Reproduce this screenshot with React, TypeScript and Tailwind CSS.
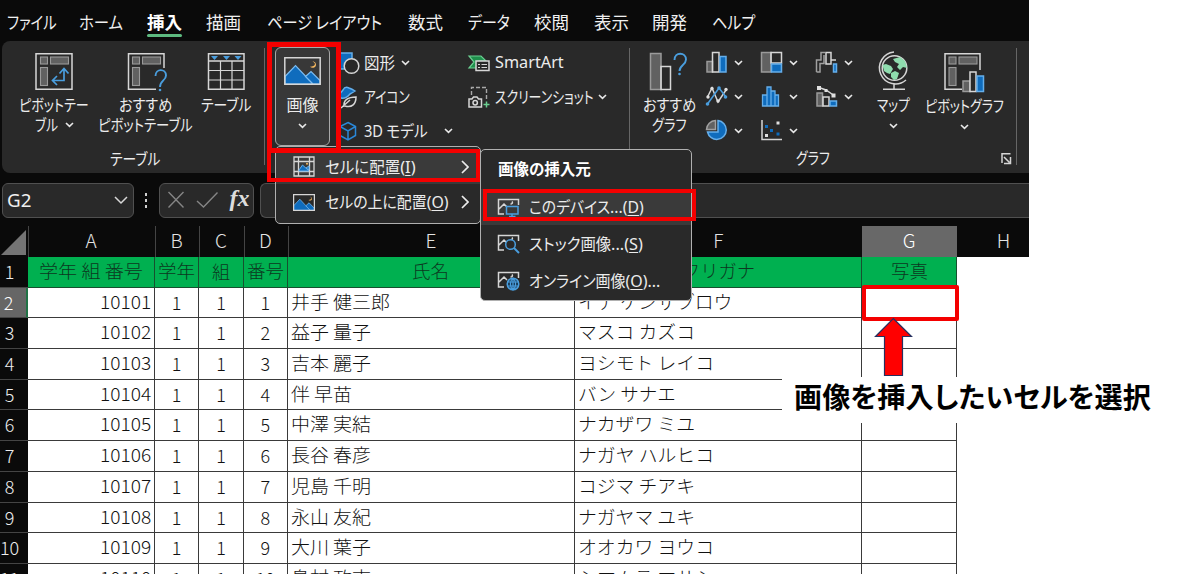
import { useLayoutEffect, useRef, useState, type ReactNode } from "react";

/** Single line of text condensed or stretched to a given width. */
function Fit({ w, className = "", children }: { w: number; className?: string; children: ReactNode }) {
  const ref = useRef<HTMLSpanElement>(null);
  const [scale, setScale] = useState(1);
  useLayoutEffect(() => {
    const el = ref.current;
    if (el && el.offsetWidth) setScale(w / el.offsetWidth);
  }, [w, children]);
  return (
    <span className={`inline-block shrink-0 whitespace-nowrap text-left ${className}`} style={{ width: w }}>
      <span ref={ref} className="inline-block origin-left" style={{ transform: `translateY(-1px) scaleX(${scale})` }}>
        {children}
      </span>
    </span>
  );
}

/** Drawing whose box is [x, y, width, height] in window coordinates. */
function Pic({ box, className = "", children }: { box: [number, number, number, number]; className?: string; children: ReactNode }) {
  return (
    <svg className={`block shrink-0 ${className}`} width={box[2]} height={box[3]} viewBox={box.join(" ")} fill="none" stroke="#d6d6d6" strokeWidth="1.5">
      {children}
    </svg>
  );
}

function Chevron({ className = "" }: { className?: string }) {
  return (
    <svg className={`block shrink-0 ${className}`} width="9" height="6" viewBox="0 0 9 6" fill="none" stroke="#e8e8e8" strokeWidth="1.6">
      <path d="M1 1l3.5 3.4L8 1" />
    </svg>
  );
}

const BLUE = "#0f6cbd";
const SKY = "#4a9ede";

const PivotFrame = ({ x, cut }: { x: number; cut: string }) => (
  <>
    <path d={cut} />
    <g fill="#616161" stroke="#9a9a9a" strokeWidth="1.1">
      <rect x={x + 4.5} y="57" width="7" height="7" />
      <rect x={x + 14.5} y="57" width="18" height="7" />
      <rect x={x + 4.5} y="67.5" width="7" height="18" />
    </g>
  </>
);

const tabs: [string, number][] = [
  ["ファイル", 50], ["ホーム", 44], ["挿入", 35], ["描画", 35], ["ページ レイアウト", 115], ["数式", 35],
  ["データ", 42], ["校閲", 35], ["表示", 35], ["開発", 35], ["ヘルプ", 43],
];

function Tabs() {
  return (
    <nav className="grid h-[41px] grid-cols-[72px_68px_59px_61px_141px_60px_66px_60px_58px_60px_60px] pl-[7px] pt-[12px] text-[17.5px] leading-[21px] text-[#f0f0f0]">
      {tabs.map(([t, w], i) => (
        <div key={t} className="flex flex-col items-start">
          <Fit w={w} className={i === 2 ? "font-bold text-white" : ""}>{t}</Fit>
          {i === 2 && <div className="mt-px h-[3px] w-[35px] rounded-full bg-[#5dba80]" />}
        </div>
      ))}
    </nav>
  );
}

function TableGroup() {
  return (
    <section className="flex h-[132px] w-[262px] flex-col">
      <div className="flex h-[106px] pt-[10px]">
        <div className="ml-[13px] flex w-[78px] flex-col items-center">
          <Pic box={[36, 51, 38, 41]}>
            <PivotFrame x={37} cut="M37 53.7H73V89.3H37Z" />
            <path stroke={SKY} strokeWidth="1.7" d="M65 69V80.5H54M60.5 73.5L65 68.5L69.5 73.5M58 76L53.5 80.5L58 85" />
          </Pic>
          <Fit w={70} className="mt-[3px] leading-[20px]">ピボットテー</Fit>
          <div className="flex items-center gap-[7px] leading-[21px]"><Fit w={23}>ブル</Fit><Chevron className="mb-px" /></div>
        </div>
        <div className="ml-[3px] flex w-[99px] flex-col items-center">
          <Pic box={[127, 51, 42, 41]} className="ml-1">
            <PivotFrame x={128} cut="M164 68V53.7H128.5V89.3H156" />
            <path stroke={SKY} strokeWidth="1.9" d="M155.5 76C155.5 68 166 68.5 166 75.5C166 80.5 160 80.5 160 87" />
            <circle cx="160" cy="90" r="1.3" fill={SKY} stroke="none" />
          </Pic>
          <Fit w={53} className="mt-[3px] leading-[20px]">おすすめ</Fit>
          <Fit w={95} className="leading-[21px]">ピボットテーブル</Fit>
        </div>
        <div className="ml-[5px] flex w-[52px] flex-col items-center">
          <Pic box={[207, 51, 38, 41]}>
            <path d="M208.500 53.700H244V89.300H208.500ZM208.500 61H244" />
            <path strokeWidth="1.200" d="M208.500 70.500H244M208.500 80H244M220.500 61V89M232 61V89" />
            <path fill={SKY} stroke="none" d="M211 56h7l-3.500 4zM223 56h7l-3.500 4zM234.500 56h7l-3.500 4z" />
          </Pic>
          <Fit w={50} className="mt-[3px] leading-[20px]">テーブル</Fit>
        </div>
      </div>
      <Fit w={50} className="ml-[108px] leading-[24px]">テーブル</Fit>
    </section>
  );
}

const Landscape = ({ box }: { box: [number, number, number, number] }) => (
  <svg className="block shrink-0" width={box[2]} height={box[3]} viewBox="0 0 37 28" preserveAspectRatio="none" fill="none" stroke="#d6d6d6" strokeWidth="1.5">
    <path fill={BLUE} stroke="#7cbcf0" strokeWidth="1.2" d="M1 19.500L11.500 8.500L29 27H1Z" />
    <path fill={BLUE} stroke="#7cbcf0" strokeWidth="1.2" d="M21.500 19.500L27 14.500L36 23.500V27H29Z" />
    <path vectorEffect="non-scaling-stroke" d="M.8.8H36.200V27.200H.8Z" />
    <path fill="#f5b860" stroke="none" d="M28.500 4.500C32.500 6 31.500 9.500 26 9.800C29 12.500 33.500 9.500 31.500 6C31 5 30 4.500 28.500 4.500Z" />
  </svg>
);

function IllustrationGroup() {
  return (
    <section className="flex h-[132px] w-[364px] pl-[10px] pt-[6px]">
      <div className="flex h-[99px] w-[55px] flex-col items-center rounded-[6px] border-[1.500px] border-[#a8a8a8] bg-[#383838] pt-[9px]">
        <Landscape box={[284, 57, 37, 28]} />
        <Fit w={32} className="mt-[9px] leading-[22px]">画像</Fit>
        <Chevron className="mt-[7px]" />
      </div>
      <div className="ml-[6px] flex w-[131px] flex-col leading-[34px]">
        <div className="flex h-[31px] items-center">
          <Pic box={[336, 50, 24, 24]}>
            <path fill={BLUE} stroke="#65aeea" d="M338 52H352V68H338Z" />
            <circle cx="351.500" cy="65" r="7.300" fill="#292929" />
          </Pic>
          <Fit w={31} className="ml-[4px]">図形</Fit><Chevron className="ml-[6px]" />
        </div>
        <div className="mt-[2px] flex h-[34px] items-center">
          <Pic box={[336, 84, 24, 24]}>
            <path fill={BLUE} stroke="#65aeea" d="M338 95L343 89Q345 85 349 87Q352 88 355 90Q352 92 350 93Q346 98 341 97Z" />
            <path fill="#292929" d="M344 106C343 99 348 96 356 96C356 103 352 107 345 105M341 107L350 99" />
          </Pic>
          <Fit w={46} className="ml-[4px]">アイコン</Fit>
        </div>
        <div className="flex h-[34px] items-center">
          <Pic box={[336, 118, 24, 24]}>
            <path stroke="#2b88d8" d="M348 121.500L355.500 125.500V134.500L348 139L340 134.500V125.500ZM340 125.500L348 130L355.500 125.500M348 130V139" />
          </Pic>
          <Fit w={64} className="ml-[4px]"><span className="font-['Noto_Sans'] leading-none">3D</span> モデル</Fit><Chevron className="ml-[16px]" />
        </div>
      </div>
      <div className="flex flex-col leading-[34px]">
        <div className="flex h-[31px] items-center">
          <Pic box={[467, 50, 24, 24]}>
            <path fill="#1f8f4c" stroke="#6bcf91" strokeWidth="1.200" d="M469 55H481L486 60H479V67H469L474 61Z" />
            <path fill="#292929" d="M476 60H489V69.500H476Z" />
            <path strokeWidth="1.200" d="M478 63.500h2M481.500 63.500h5.500M478 66.500h2M481.500 66.500h5.500" />
          </Pic>
          <Fit w={69} className="ml-[4px] font-['Noto_Sans']">SmartArt</Fit>
        </div>
        <div className="mt-[2px] flex h-[34px] items-center">
          <Pic box={[467, 84, 24, 24]}>
            <path stroke="#a8a8a8" strokeWidth="1.400" strokeDasharray="4 2" d="M471.500 94V86.500H486.500V100" />
            <path fill="#292929" d="M469 98H472L473.500 96H477L478.500 98H481.500V106H469Z" />
            <circle cx="475.200" cy="101.800" r="2.200" />
            <path stroke="#6bcf91" d="M486.500 100.500v6M483.500 103.500h6" />
          </Pic>
          <Fit w={99} className="ml-[4px]">スクリーンショット</Fit><Chevron className="ml-[4px]" />
        </div>
      </div>
    </section>
  );
}

const chartIcons: { box: [number, number, number, number]; art: ReactNode }[] = [
  { box: [705, 51, 24, 23], art: <><path fill="#616161" stroke="#9a9a9a" d="M707 61.500H712.500V72H707Z" /><path d="M712.500 52.500H719V72H712.500Z" /><path fill={BLUE} stroke="#65aeea" d="M720 56.500H726V72H720Z" /></> },
  { box: [760, 51, 24, 23], art: <><path fill="#616161" stroke="#9a9a9a" d="M761.500 52.500H771V72H761.500Z" /><path d="M771 52.500H781.500V63H771Z" /><path fill={BLUE} stroke="#65aeea" d="M771.500 64H781.500V72H771.500Z" /></> },
  { box: [815, 51, 24, 23], art: <><path stroke="#a0a0a0" d="M816.500 72V60H821V52.500H825M816.500 72H820V63.500H824V55" /><path d="M826 52.500H831V64H826ZM831 60H836" /><path fill={BLUE} stroke="#65aeea" d="M833.500 64H836.500V72H833.500Z" /></> },
  { box: [705, 85, 24, 23], art: <><path d="M707.500 97L712 88L718 102L726 90" /><path stroke={SKY} d="M707.500 104L719 88L726 97" /><g fill="#e0e0e0" stroke="none"><circle cx="708" cy="97" r="1.700" /><circle cx="712" cy="88.500" r="1.700" /><circle cx="718" cy="101" r="1.700" /><circle cx="726" cy="89.500" r="1.700" /></g><g fill={SKY} stroke="none"><circle cx="707.500" cy="104" r="1.800" /><circle cx="719" cy="88" r="1.800" /><circle cx="725.500" cy="97" r="1.800" /></g></> },
  { box: [760, 85, 24, 23], art: <path fill={BLUE} stroke="#65aeea" strokeWidth="1.300" d="M762.500 106V95H767V87H771V91H775V95H778.500V106ZM767 95V106M771 91V106M775 95V106" /> },
  { box: [815, 85, 24, 23], art: <><path fill="#616161" stroke="#9a9a9a" d="M817 93H822.500V106H817Z" /><path d="M823 97H829V106H823ZM819 87.500L826 90L834 95.500" /><path fill={BLUE} stroke="#65aeea" d="M830 101H836.500V106H830Z" /><path fill="#e0e0e0" stroke="none" d="M817 86h4v4h-4zM824.500 89h3v3h-3zM831.500 93.500h4v4h-4z" /></> },
  { box: [705, 119, 24, 23], art: <><path fill={BLUE} stroke="#65aeea" d="M718 120.500A9.500 9.500 0 1 1 707.500 132H718Z" /><path fill="#616161" stroke="#a0a0a0" d="M715.500 120.500V129.500H706.500A9.500 9.500 0 0 1 715.500 120.500Z" /></> },
  { box: [760, 119, 24, 23], art: <><path d="M762 120V139.500H782" /><path fill={BLUE} stroke="none" d="M765 125h3v3h-3zM770 129h3v3h-3zM776.500 132.500h3v3h-3z" /><path fill="#e0e0e0" stroke="none" d="M776.500 121.500h3v3h-3zM765 134h3v3h-3z" /></> },
];

function ChartGroup() {
  return (
    <section className="flex h-[132px] w-[386px] flex-col">
      <div className="flex h-[106px] pt-[10px]">
        <div className="ml-[9px] flex w-[60px] flex-col items-center">
          <Pic box={[649, 51, 42, 41]}>
            <path fill="#616161" stroke="#9a9a9a" d="M651.500 53.500H662V89.500H651.500Z" />
            <path d="M662 66.500H671.500V89.500H662Z" />
            <path stroke={SKY} strokeWidth="1.900" d="M675.500 60C675.500 51.500 687 52 687 59.500C687 65 680.500 65 680.500 71" />
            <circle cx="680.500" cy="74" r="1.300" fill={SKY} stroke="none" />
          </Pic>
          <Fit w={53} className="mt-[3px] leading-[20px]">おすすめ</Fit>
          <Fit w={35} className="leading-[20px]">グラフ</Fit>
        </div>
        <div className="ml-[6px] grid h-[102px] w-[165px] grid-cols-3 grid-rows-3">
          {chartIcons.map((c, i) => (
            <div key={i} className="flex h-[23px] items-center gap-[5px]"><Pic box={c.box}>{c.art}</Pic><Chevron /></div>
          ))}
        </div>
        <div className="flex w-[46px] flex-col items-center">
          <Pic box={[875, 51, 36, 41]}>
            <circle cx="894.500" cy="68" r="12.300" />
            <path fill="#8fdcae" stroke="none" d="M882.500 65L886 64L891 66L893 69L890 74L887 73L884 71ZM893 59L900 57L905 61L907 68L903 67L900 70L897 67L899 64L895 62ZM891 73L895 71L899 73L897 79L894 80L891 77Z" />
            <path d="M894 52A16 16 0 1 0 906 80M894 84V89M883 89.300H905" />
          </Pic>
          <Fit w={33} className="mt-[3px] leading-[20px]">マップ</Fit>
          <Chevron className="mt-[8px]" />
        </div>
        <div className="ml-[8px] flex w-[81px] flex-col items-center">
          <Pic box={[946, 51, 41, 42]}>
            <PivotFrame x={946.500} cut="M982 70V53.700H947V89.300H964" />
            <path fill="#616161" stroke="#9a9a9a" d="M965 81H972V91.500H965Z" />
            <path fill="#292929" d="M972 72H978V91.500H972Z" />
            <path fill={BLUE} stroke="#65aeea" d="M979 76H985.500V91.500H979Z" />
          </Pic>
          <Fit w={79} className="mt-[3px] leading-[20px]">ピボットグラフ</Fit>
          <Chevron className="mt-[8px]" />
        </div>
      </div>
      <div className="flex items-center pl-[166px] leading-[23px]">
        <Fit w={34}>グラフ</Fit>
        <Pic box={[1001, 153, 13, 13]} className="ml-[170px]"><path d="M1003 164V154.800H1011.500M1005 158L1010.500 163.500M1011.500 158V164.500H1005" /></Pic>
      </div>
    </section>
  );
}

const Divider = () => <div className="mt-[7px] h-[117px] w-px shrink-0 bg-[#666]" />;

function FormulaBar() {
  return (
    <div className="flex h-[53px] pt-[9.500px]">
      <div className="ml-[1.500px] flex h-[35px] w-[132px] items-center justify-between rounded-[6px] border border-[#505050] bg-[#292929] pl-[4px] pr-[5px] text-[18px] text-[#f0f0f0]">
        <Fit w={24} className="translate-y-px font-['Noto_Sans']">G2</Fit>
        <svg width="14" height="9" viewBox="0 0 14 9" fill="none" stroke="#d8d8d8" strokeWidth="1.500"><path d="M1 1l6 6 6-6" /></svg>
      </div>
      <div className="ml-[11px] flex w-[3px] flex-col justify-center gap-[3px] pb-2">
        {[0, 1, 2].map((i) => <i key={i} className="h-[3px] w-[2.500px] bg-[#d0d0d0]" />)}
      </div>
      <div className="ml-[11px] flex h-[35px] w-[95.500px] items-center rounded-[6px] border border-[#505050] bg-[#292929] pl-[7px]">
        <Pic box={[167, 191, 58, 20]}><path stroke="#858585" strokeWidth="1.400" d="M168.500 193L183.500 208.500M183.500 193L168.500 208.500M197 202L203.500 208L217.500 193.500" /></Pic>
        <span className="ml-[5px] pb-1 font-['Liberation_Serif'] text-[24px] font-bold italic leading-[26px] text-[#dcdcdc]">fx</span>
      </div>
      <div className="ml-[6px] h-[35px] flex-1 rounded-l-[6px] border border-r-0 border-[#505050] bg-[#292929]" />
    </div>
  );
}

const COLS = "grid-cols-[28px_127px_44.300px_44.300px_44.400px_287px_287.500px_94.500px]";

function ColumnHeads() {
  return (
    <div className={`grid h-[31px] ${COLS} text-[19px] font-light leading-[28px] text-[#e4e4e4]`}>
      <div className="flex justify-center pt-[4px]"><svg width="26" height="26" viewBox="0 0 26 26"><path fill="#747474" d="M25 0V25H0Z" /></svg></div>
      {["A", "B", "C", "D", "E", "F"].map((c) => <div key={c} className="border-l border-[#444] pr-[2px] text-center">{c}</div>)}
      <div className="bg-[#686868] pr-px text-center text-white">G</div>
      <div className="col-start-9 w-[71px] pl-[22px] text-center">H</div>
    </div>
  );
}

const rows: [string, string, string, string, number, string, number][] = [
  ["2", "10101", "1", "井手 健三郎", 99, "イデ ケンザブロウ", 154],
  ["3", "10102", "2", "益子 量子", 80, "マスコ カズコ", 117],
  ["4", "10103", "3", "吉本 麗子", 80, "ヨシモト レイコ", 136],
  ["5", "10104", "4", "伴 早苗", 61, "バン サナエ", 98],
  ["6", "10105", "5", "中澤 実結", 80, "ナカザワ ミユ", 117],
  ["7", "10106", "6", "長谷 春彦", 80, "ナガヤ ハルヒコ", 136],
  ["8", "10107", "7", "児島 千明", 80, "コジマ チアキ", 117],
  ["9", "10108", "8", "永山 友紀", 80, "ナガヤマ ユキ", 117],
  ["10", "10109", "9", "大川 葉子", 80, "オオカワ ヨウコ", 136],
  ["11", "10110", "10", "島村 政志", 80, "シマムラ マサシ", 136],
];

function Sheet() {
  const cell = "h-[30.700px] overflow-hidden border-b border-r border-[#3a3a3a]";
  const head = "h-[30.700px] border-b border-r border-[#17502f] bg-[#00b050] text-center text-[#0c3820]";
  const line = "leading-[29.500px]";
  return (
    <div className="w-[957px] text-[18px] font-light leading-[28px] text-[#111] [font-feature-settings:normal]">
      <div className={`grid ${COLS}`}>
        <div className="border-b border-[#444] bg-[#0a0a0a] pr-[9px] text-center text-[#eee]">1</div>
        <div className={head}><Fit w={104} className={line}>学年 組 番号</Fit></div>
        <div className={head}><Fit w={37} className={line}>学年</Fit></div>
        <div className={head}>組</div>
        <div className={head}><Fit w={37} className={line}>番号</Fit></div>
        <div className={head}><Fit w={37} className={line}>氏名</Fit></div>
        <div className={head}><Fit w={73} className={line}>フリガナ</Fit></div>
        <div className={head}><Fit w={37} className={line}>写真</Fit></div>
      </div>
      {rows.map(([n, id, no, name, nw, kana, kw], i) => (
        <div key={n} className={`grid ${COLS}`}>
          <div className={`flex justify-center border-b border-[#444] pr-[9px] ${i === 0 ? "border-r-2 border-r-[#217346] bg-[#666] text-white" : "bg-[#0a0a0a] text-[#eee]"}`}>{n}</div>
          <div className={`${cell} pr-[3px] text-right`}><Fit w={51} className={line}>{id}</Fit></div>
          <div className={`${cell} text-center`}>1</div>
          <div className={`${cell} text-center`}>1</div>
          <div className={`${cell} text-center`}>{no}</div>
          <div className={`${cell} pl-[3px]`}><Fit w={nw} className={line}>{name}</Fit></div>
          <div className={`${cell} pl-[3px]`}><Fit w={kw} className={line}>{kana}</Fit></div>
          <div className={cell} />
        </div>
      ))}
    </div>
  );
}

const MenuArrow = () => <svg className="block shrink-0" width="8" height="14" viewBox="0 0 8 14" fill="none" stroke="#ececec" strokeWidth="1.700"><path d="M1 1l6 6-6 6" /></svg>;

/** Keyboard accelerator shown after a menu label. */
const Key = ({ k, dots = "" }: { k: string; dots?: string }) => (
  <span className="font-['Noto_Sans'] text-[17px] leading-none">{dots}(<u className="underline-offset-2">{k}</u>)</span>
);

function PlacementMenu() {
  return (
    <div className="absolute left-[275px] top-[146px] h-[78px] w-[206px] rounded-[5px] border-[1.500px] border-[#b0b0b0] bg-[#292929] pt-[2px]">
      <div className="flex h-[35px] items-center bg-[#3a3a3a] pl-[17px]">
        <Pic box={[293, 156, 22, 21]}>
          <path strokeWidth="1.300" d="M294 157H314V176H294ZM294 161.500H314M294 171.500H314M298.500 157V176M309.500 157V176" />
          <path fill={BLUE} stroke="#65aeea" strokeWidth="1" d="M299 170L302.500 165L309 171H299ZM306 168l3-2v4z" />
          <circle cx="307" cy="163.800" r="1" fill="#f5b860" stroke="none" />
        </Pic>
        <Fit w={91} className="ml-[10px]">セルに配置<Key k="I" /></Fit>
        <div className="ml-[45px]"><MenuArrow /></div>
      </div>
      <div className="mt-px flex h-[34px] items-center pl-[17px]">
        <Landscape box={[293, 195, 22, 17]} />
        <Fit w={124} className="ml-[10px]">セルの上に配置<Key k="O" /></Fit>
        <div className="ml-[12px]"><MenuArrow /></div>
      </div>
    </div>
  );
}

const Thumb = ({ children }: { children: ReactNode }) => (
  <svg className="block shrink-0" width="23" height="21" viewBox="0 0 23 21" fill="none" stroke="#d6d6d6" strokeWidth="1.500">
    <path d="M7 17H1.500V2.500H21.500V8M2 12L7 7L10 10M15 4.500C16 6 15 7 13.500 7" />
    {children}
  </svg>
);

function SourceMenu() {
  return (
    <div className="absolute left-[480px] top-[149px] h-[152px] w-[212px] rounded-[5px] border-[1.500px] border-[#b0b0b0] bg-[#292929]">
      <div className="h-[39px] pl-[17px] pt-[8px] font-bold leading-[23px] text-white"><Fit w={93}>画像の挿入元</Fit></div>
      <div className="flex h-[36px] items-center bg-[#3a3a3a] pl-[16px]">
        <Thumb><path stroke={SKY} fill="#3a3a3a" d="M9.500 9.500H21V17H9.500ZM15 17V19.500M12 19.500H18.500" /></Thumb>
        <Fit w={115} className="ml-[9px]">このデバイス<Key dots="..." k="D" /></Fit>
      </div>
      <div className="flex h-[37px] items-center pl-[16px]">
        <Thumb><circle cx="13.500" cy="11.500" r="4.800" stroke={SKY} fill="#292929" /><path stroke={SKY} strokeWidth="1.900" d="M17 15L22 20" /></Thumb>
        <Fit w={114} className="ml-[9px]">ストック画像<Key dots="..." k="S" /></Fit>
      </div>
      <div className="flex h-[37px] items-center pl-[16px]">
        <Thumb><circle cx="16" cy="14" r="5.800" stroke={SKY} fill="#173a57" /><path stroke={SKY} strokeWidth="1.200" d="M10 12H22M10 16H22M16 8V20M16 8C12.500 11 12.500 17 16 20C19.500 17 19.500 11 16 8" /></Thumb>
        <Fit w={131} className="ml-[9px]">オンライン画像<Key k="O" /><span className="font-['Noto_Sans'] text-[17px] leading-none">...</span></Fit>
      </div>
    </div>
  );
}

export default function App() {
  return (
    <div className="relative h-[574px] w-[1200px] overflow-hidden bg-white font-['Noto_Sans_CJK_JP',sans-serif] text-[16px] text-[#ececec] [font-feature-settings:'palt']">
      <header className="h-[257px] w-[1028.500px] overflow-hidden bg-[#0a0a0a]">
        <Tabs />
        <div className="ml-[2px] flex h-[132px] rounded-l-[8px] bg-[#292929]">
          <TableGroup /><Divider /><IllustrationGroup /><Divider /><ChartGroup /><Divider />
        </div>
        <FormulaBar />
        <ColumnHeads />
      </header>
      <Sheet />

      <PlacementMenu />
      <SourceMenu />

      <div className="absolute left-[267px] top-[42px] h-[111px] w-[74px] border-[5px] border-[#f40000]" />
      <div className="absolute left-[267px] top-[149px] h-[33px] w-[213px] border-[4px] border-[#f40000]" />
      <div className="absolute left-[483px] top-[189px] h-[32px] w-[213px] border-[4px] border-[#f40000]" />
      <div className="absolute left-[862px] top-[285px] h-[36px] w-[97px] rounded-[2px] border-[4px] border-[#f40000] bg-white" />
      <div className="absolute left-[782px] top-[377px] h-[46px] w-[400px] bg-white pl-[12px] text-[28px] font-bold leading-[41px] text-black">
        <Fit w={357}>画像を挿入したいセルを選択</Fit>
      </div>
      <Pic box={[874, 317, 39, 60]} className="absolute left-[874px] top-[317px]">
        <path fill="#ff0000" stroke="#26305f" strokeWidth="1.200" d="M893.300 318.500L911.500 336.500H902.500V375.500H884.500V336.500H875.500Z" />
      </Pic>
    </div>
  );
}
